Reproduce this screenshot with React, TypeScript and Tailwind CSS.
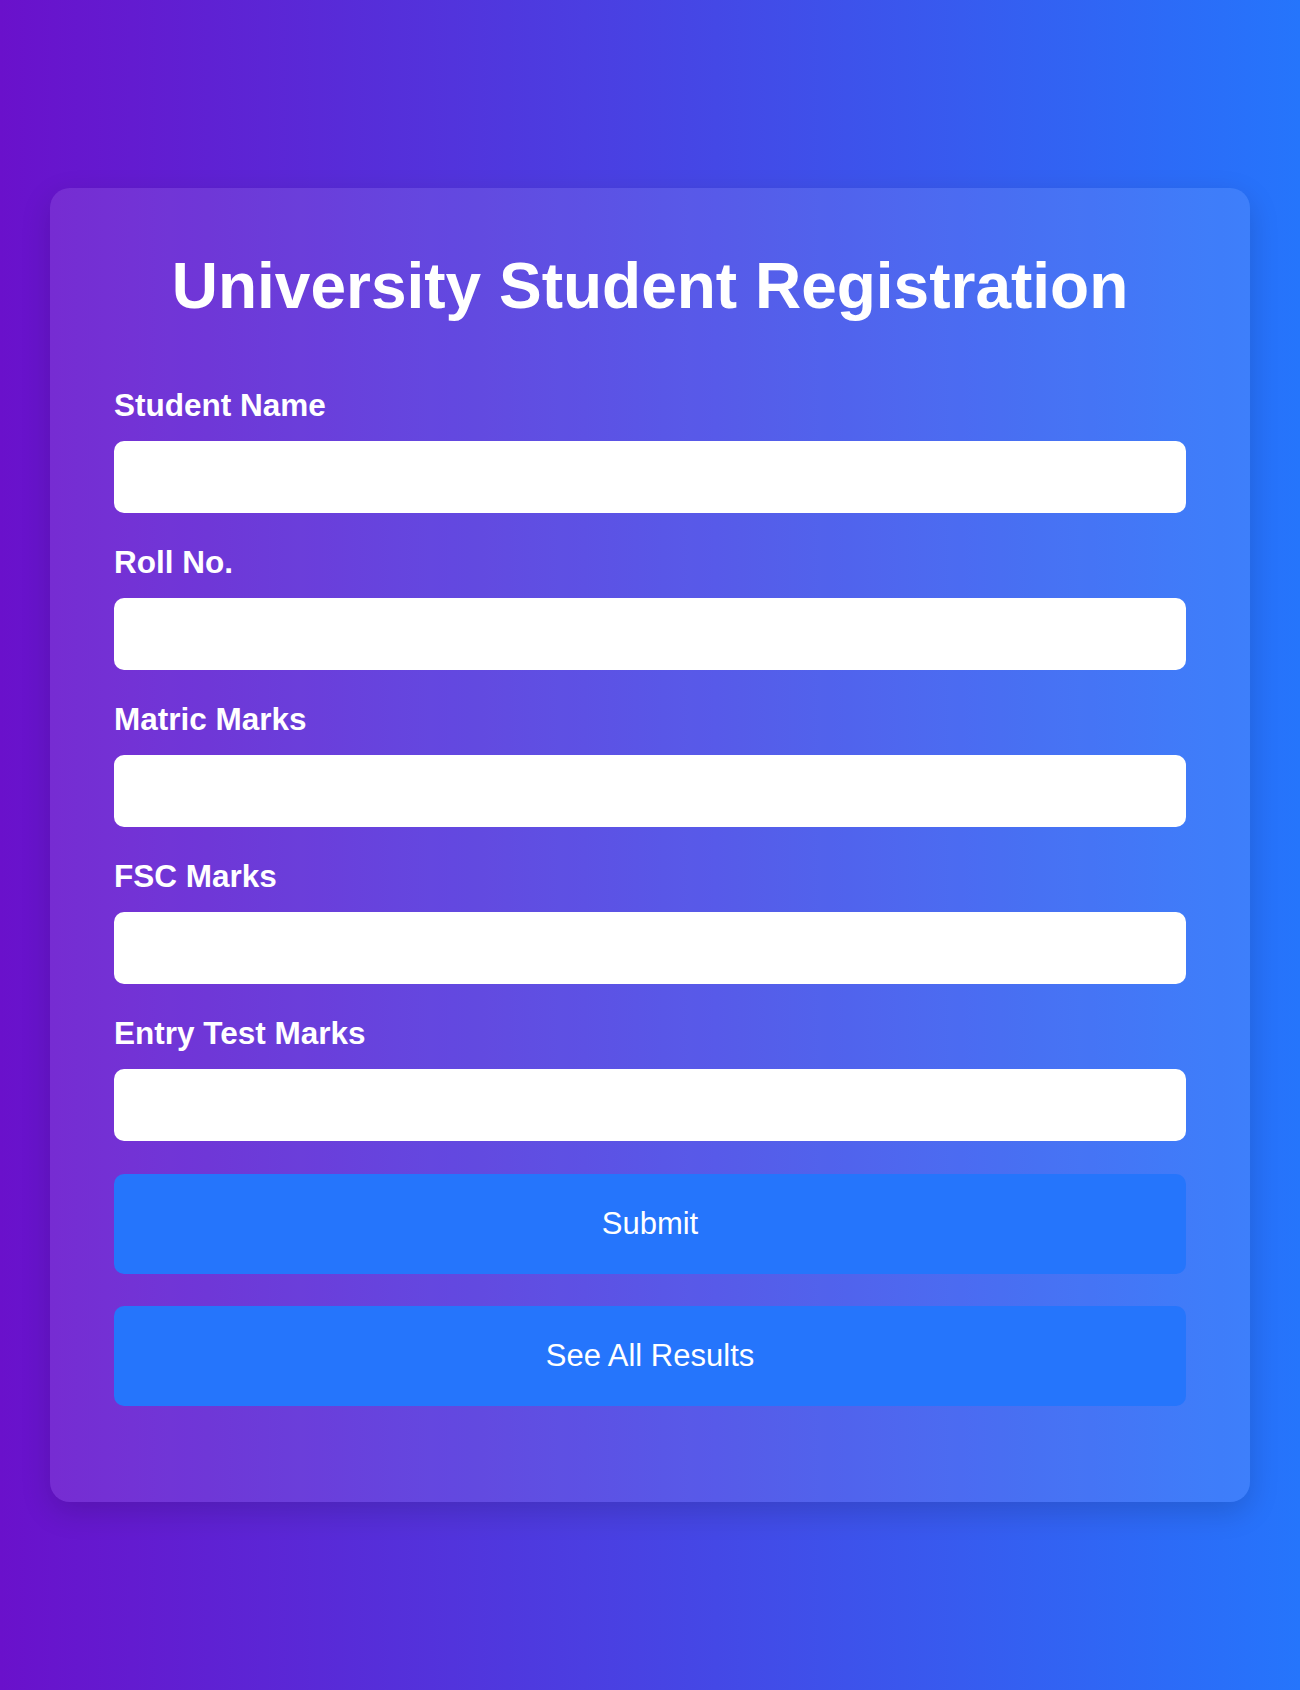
import { useState, type FormEvent } from "react";

const FIELDS = [
  { id: "name", label: "Student Name", type: "text" },
  { id: "roll", label: "Roll No.", type: "text" },
  { id: "matric", label: "Matric Marks", type: "number" },
  { id: "fsc", label: "FSC Marks", type: "number" },
  { id: "entry", label: "Entry Test Marks", type: "number" },
];

export default function App() {
  const [values, setValues] = useState<Record<string, string>>({});

  const handleSubmit = (e: FormEvent) => {
    e.preventDefault();
  };

  return (
    <div className="flex min-h-[1690px] items-center justify-center bg-linear-to-r/srgb from-[#6a11cb] to-[#2575fc] font-['Liberation_Sans',Arial,sans-serif] text-white">
      <div className="w-[1200px] rounded-[20px] bg-white/10 px-16 pt-[62px] pb-24 shadow-[0_10px_30px_rgba(0,0,0,0.15)]">
        <h1 className="text-center text-[64px] font-bold leading-[73.5px]">
          University Student Registration
        </h1>

        <form onSubmit={handleSubmit} className="mt-[63px] flex flex-col">
          {FIELDS.map((f) => (
            <div key={f.id} className="mb-[31px] flex flex-col">
              <label
                htmlFor={f.id}
                className="mb-[18px] text-[31.5px] font-bold leading-[36px]"
              >
                {f.label}
              </label>
              <input
                id={f.id}
                type={f.type}
                value={values[f.id] ?? ""}
                onChange={(e) =>
                  setValues((v) => ({ ...v, [f.id]: e.target.value }))
                }
                className="h-[72px] w-full rounded-[10px] border border-white/60 bg-white px-4 text-[28px] text-gray-900 outline-none"
              />
            </div>
          ))}

          {/* Actions */}
          <button
            type="submit"
            className="mt-[2px] h-[100px] w-full rounded-[10px] bg-[#2575fc] text-[31px] text-white"
          >
            Submit
          </button>
          <button
            type="button"
            className="mt-[32px] h-[100px] w-full rounded-[10px] bg-[#2575fc] text-[31px] text-white"
          >
            See All Results
          </button>
        </form>
      </div>
    </div>
  );
}
